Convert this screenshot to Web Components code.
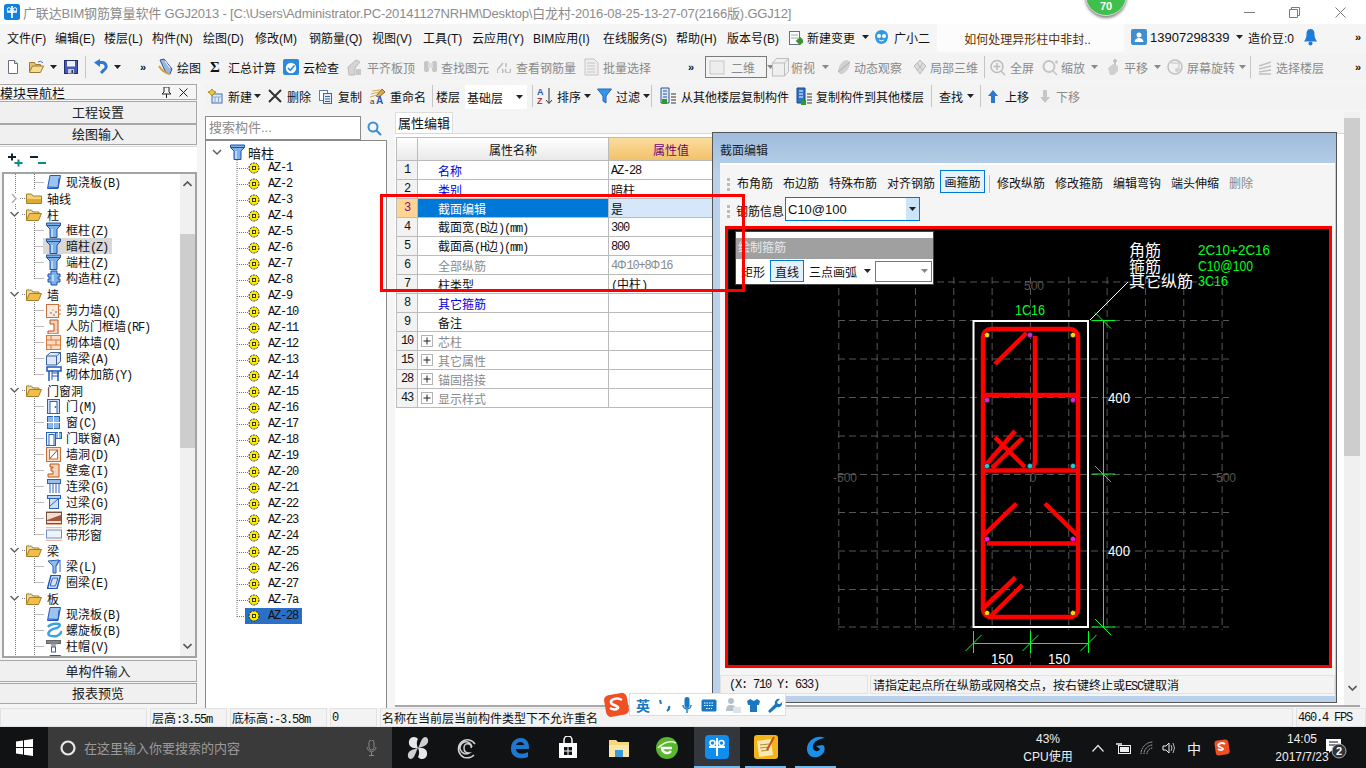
<!DOCTYPE html>
<html lang="zh">
<head>
<meta charset="utf-8">
<title>GGJ2013</title>
<style>
  html, body { margin: 0; padding: 0; height: 100%; overflow: hidden; background: #f5f5f5; }
  body { font: 12px "Liberation Sans", "Noto Sans CJK SC", sans-serif; color: #111; }
</style>
</head>
<body>
<ggj-app>
  <title-bar></title-bar>
  <menu-bar></menu-bar>
  <main-toolbar></main-toolbar>
  <work-area>
    <nav-panel slot="nav"></nav-panel>
    <edit-toolbar slot="bar"></edit-toolbar>
    <component-tree slot="tree"></component-tree>
    <prop-panel slot="props"></prop-panel>
  </work-area>
  <status-strip></status-strip>
  <win-taskbar></win-taskbar>
  <section-dialog></section-dialog>
  <red-mark></red-mark>
  <score-badge></score-badge>
  <ime-bar></ime-bar>
</ggj-app>

<script>
// small helpers shared by all parts
const svg = (w, h, inner, extra = '') => `<svg width="${w}" height="${h}" viewBox="0 0 ${w} ${h}" ${extra}>${inner}</svg>`;
const caret = (c = '#222') => svg(7, 4, `<path d="M0 0h7L3.5 4z" fill="${c}"/>`);
const sep = '<i class="sep"></i>';
// latin text in the old program is a half width mono face
const L = s => `<span>${s.replace(/[\x21-\x7e]+(?: [\x21-\x7e]+)*/g, m => `<span class="l">${m}</span>`)}</span>`;
// turns [x, width, html, class] into a flex row, x only decides the margin
const flow = (items, start = 0) => {
  let cur = start;
  return items.map(([x, w, html, cls = '']) => {
    const m = x - cur; cur = x + w;
    return `<span class="it ${cls}" style="margin-left:${m}px;width:${w}px">${html}</span>`;
  }).join('');
};
const flowCss = `
  .it { flex: none; display: flex; align-items: center; white-space: nowrap; height: 100%; }
  .g { color: #8a8a8a; }
  .sep { display: block; width: 1px; height: 22px; background: #c4c4c4; }
  .l { font: 12px "Liberation Mono", monospace; letter-spacing: -1.2px; white-space: pre; }
  svg { display: block; flex: none; }
`;

// toolbar icons
const I = {
  doc: svg(16,16,'<path d="M3.5 1.5h6l3 3v10h-9z" fill="#fff" stroke="#6a7080"/><path d="M9.5 1.5v3h3" fill="#d8dde8" stroke="#6a7080"/>'),
  open: svg(17,16,'<path d="M1.5 13V3.5h5l1 2h5v2" fill="#e6c26c" stroke="#9d7a30"/><path d="M1.5 13l3-6h11l-3 6.5h-11z" fill="#f6dc92" stroke="#9d7a30"/><path d="M10 3q3-2 5 1" fill="none" stroke="#3a78c8"/>'),
  save: svg(16,16,'<rect x="1.5" y="1.5" width="13" height="13" fill="#4659b5" stroke="#232d72"/><rect x="4" y="2" width="8" height="5.5" fill="#eef1fb"/><rect x="5" y="10" width="6" height="4.5" fill="#c5cbe3"/><rect x="8.5" y="11" width="1.5" height="3" fill="#334"/>'),
  undo: svg(14,16,'<path d="M4 3.5h4a4 4 0 0 1 2 7.5l-3 3" fill="none" stroke="#2f78cf" stroke-width="3"/><path d="M6 0v8L0 3.5z" fill="#2f78cf"/>'),
  draw: svg(17,18,'<path d="M3 2l4-1 8 10-2 5-4-1z" fill="#9ab7df" stroke="#2c5596"/><path d="M2 8q4 7 11 8" fill="none" stroke="#d5a33c" stroke-width="2"/><path d="M8 3l5 7" stroke="#fff"/>'),
  cloud: svg(16,16,'<rect width="16" height="16" rx="2" fill="#2a8ade"/><circle cx="8" cy="9" r="5.2" fill="#fff"/><path d="M5 9l2.3 2.3L11.5 6.5" fill="none" stroke="#2a8ade" stroke-width="1.6"/>'),
  flat: svg(15,18,'<path d="M1 9l8-7 4 2-5 6v7H2z" fill="#d4d4d4" stroke="#bbb"/><rect x="9" y="11" width="5" height="6" fill="#c8c8c8"/>'),
  find: svg(15,16,'<rect x="1" y="2" width="5" height="11" rx="2" fill="#c6c6c6"/><rect x="9" y="2" width="5" height="11" rx="2" fill="#c6c6c6"/><rect x="5" y="4" width="5" height="5" fill="#ddd"/>'),
  look: svg(14,12,'<path d="M1 8a3 3 0 1 0 4 0M1 8l5-6M9 8a2.500 2.500 0 1 0 4 0M9 6V2" fill="none" stroke="#bdbdbd" stroke-width="1.5"/>'),
  batch: svg(15,18,'<path d="M1 1h9l4 4v12H1z" fill="#eee" stroke="#c4c4c4"/><path d="M3 5h8M3 8h8M3 11h8M3 14h8" stroke="#c4c4c4"/>'),
  square: svg(16,16,'<rect x="1" y="2" width="14" height="13" fill="#ededed" stroke="#c8c8c8"/>'),
  cube: svg(19,20,'<path d="M1.500 6l4-4.500h12v13l-4 4.500h-12zM1.500 6h12v13M13.500 6l4-4.500" fill="#efefef" stroke="#bdbdbd"/>'),
  orbit: svg(16,18,'<ellipse cx="8" cy="9" rx="4.500" ry="8" transform="rotate(35 8 9)" fill="#d0d0d0"/><path d="M2 14L14 4" stroke="#aaa"/>'),
  part: svg(14,16,'<path d="M7 1l6 6-6 8-6-8z" fill="#dcdcdc" stroke="#bcbcbc"/><path d="M4 4l6 8M10 4l-6 8" stroke="#bcbcbc"/>'),
  full: svg(16,17,'<circle cx="7" cy="7.500" r="6" fill="#f2f2f2" stroke="#bcbcbc" stroke-width="1.500"/><path d="M7 4v7M3.500 7.500h7M11 12l4 4" stroke="#bcbcbc" stroke-width="1.500"/>'),
  zoom: svg(17,17,'<circle cx="7" cy="7.500" r="5.500" fill="#f4f4f4" stroke="#c4c4c4" stroke-width="2"/><path d="M11 12l4 4M13 3h3M14.500 1.500v3" stroke="#c4c4c4" stroke-width="1.500"/>'),
  pan: svg(15,18,'<path d="M3 10l5-4 5 2v5l-4 4H5z" fill="#cfcfcf"/><path d="M10 1v6M8 3h4" stroke="#b8b8b8" stroke-width="1.500"/>'),
  rotate: svg(16,18,'<circle cx="8" cy="9" r="7" fill="#f2f2f2" stroke="#c0c0c0" stroke-width="1.500"/><path d="M4 5h8v8" fill="none" stroke="#c0c0c0"/><circle cx="10" cy="12" r="2" fill="#d0d0d0"/>'),
  floor: svg(14,15,'<path d="M1 6l12-4M1 9l12-3M1 12l12-2M1 14h12" stroke="#c0c0c0" stroke-width="1.500"/>'),
  news: svg(15,17,'<rect x="1.500" y="2.500" width="10" height="13" fill="#fff" stroke="#6a7080"/><path d="M3 6h7M3 9h7" stroke="#9aa"/><rect x="9" y="9" width="6" height="6" transform="rotate(45 12 12)" fill="#3d8f39"/>'),
  doll: svg(15,15,'<path d="M1 6a6.500 6 0 0 1 13 0c0 5-3 8-6.500 8S1 11 1 6z" fill="#2f9be6"/><circle cx="5" cy="6" r="2" fill="#fff"/><circle cx="10" cy="6" r="2" fill="#fff"/><path d="M5 10q2.500 2 5 0" stroke="#fff" fill="none"/>'),
  user: svg(16,16,'<rect width="16" height="16" rx="2" fill="#3e8ed0"/><circle cx="8" cy="6" r="2.500" fill="#fff"/><path d="M3.500 13c.5-3 2-4 4.500-4s4 1 4.500 4z" fill="#fff"/>'),
  bell: svg(13,18,'<path d="M6.500 1C3 1 2.500 4 2.500 7S1 12 0 13.500h13C12 12 10.500 10 10.500 7S10 1 6.500 1z" fill="#1b7cd9"/><circle cx="6.500" cy="15.500" r="2" fill="#1b7cd9"/>'),
  newp: svg(16,16,'<rect x="5" y="6" width="10" height="9" fill="#dfe7f5" stroke="#4470b0"/><path d="M5 9h10M8 9v6M11.500 9v6" stroke="#8fa8cf"/><path d="M5 1L7 3.500 9 4 7 5.500 5 8 3 5.500 1 4 3 3.500z" fill="#e9c93a" stroke="#a88d1c"/>'),
  del: svg(14,14,'<path d="M1 1l12 12M13 1L1 13" stroke="#333" stroke-width="2"/>'),
  copy: svg(15,15,'<rect x="1.500" y="1.500" width="8" height="10" fill="#fff" stroke="#5a7fb0"/><rect x="5.500" y="4.500" width="8" height="10" fill="#dfe9f7" stroke="#3c66a5"/><path d="M7 7.500h5M7 10h5M7 12.500h5" stroke="#3c66a5"/>'),
  rename: svg(17,17,'<path d="M7 8L13 1l3 3-6 5z" fill="#d5ad4f" stroke="#8b6d1e"/><path d="M3 3l8-1M2 6l8-2M1 9l7-2" stroke="#d5ad4f"/><text x="1" y="16" font-size="8" font-family="Liberation Sans" fill="#333">a</text><text x="7" y="16" font-size="10" font-weight="bold" font-family="Liberation Sans" fill="#1f59bd">A</text>'),
  sort: svg(16,18,'<text x="0" y="8" font-size="9" font-weight="bold" font-family="Liberation Sans" fill="#1f59bd">A</text><text x="0" y="17" font-size="9" font-weight="bold" font-family="Liberation Sans" fill="#c0392b">Z</text><path d="M12 1v15M9 13l3 3.500 3-3.500" fill="none" stroke="#333"/>'),
  funnel: svg(15,16,'<path d="M.5 1h14L9 8v7l-3-2V8z" fill="#3794e8" stroke="#1e68b0"/>'),
  fromf: svg(17,19,'<path d="M1 1h8v15H1z" fill="#dbe6f6" stroke="#2c5596"/><path d="M3 4h4M3 7h4M3 10h4" stroke="#2c5596"/><rect x="2" y="12" width="5" height="5" fill="#2f9a2f"/><path d="M11 7h5M11 10h5M11 13h5M11 16h5" stroke="#777" stroke-width="1.500"/>'),
  tof: svg(17,19,'<path d="M1 1h8v15H1z" fill="#2e72c9" stroke="#1d4b8e"/><path d="M3 4h4M3 7h4M3 10h4" stroke="#fff"/><rect x="5" y="13" width="5" height="5" fill="#2f9a2f"/><path d="M11 7h5M11 10h5M11 13h5M11 16h5" stroke="#777" stroke-width="1.500"/>'),
  up: svg(10,13,'<path d="M5 0l5 6H7v7H3V6H0z" fill="#2a78d2"/>'),
  down: svg(10,13,'<path d="M5 13l5-6H7V0H3v7H0z" fill="#c6c6c6"/>'),
  gear: svg(12,12,'<circle cx="6" cy="6" r="5" fill="#ffea00" stroke="#222" stroke-dasharray="2 1.100"/><rect x="4" y="4" width="4" height="4" fill="#333"/><rect x="5" y="5" width="2" height="2" fill="#ff0"/>'),
};

// tree icons, same 16 box
const T = {
  folder: svg(16,15,'<path d="M.5 12.500V3h5l1.500 2h8.500v7.500z" fill="#f3d376" stroke="#a2812c"/><path d="M1 8h14v4H1z" fill="#e3a92f"/>'),
  open: svg(16,15,'<path d="M.5 13V3h5l1.500 2h6v2" fill="#ecd9a8" stroke="#a2812c"/><path d="M.5 13.500l3-7h12l-3 7z" fill="#f2bd48" stroke="#a2812c"/>'),
  col: svg(15,16,'<path d="M.5 1h14v2.500l-3.500 3.500v8.500H4V7L.5 3.500z" fill="#7cb1ea" stroke="#1f4fa8"/><path d="M1 3.500h13" stroke="#1f4fa8"/><path d="M6 7v8" stroke="#fff"/>'),
  gzz: svg(15,16,'<path d="M5 1h6v3h3v3h-2v2h2v3h-3v3H5v-3H2V9h2V7H2V4h3z" fill="#7cb1ea" stroke="#1f4fa8"/><path d="M7 5v6" stroke="#fff"/>'),
  wall: svg(15,15,'<rect x=".5" y="1.500" width="12" height="13" fill="#fbeadd" stroke="#c8703a"/><path d="M13 3h2M13 7h2M13 11h2" stroke="#c8703a"/><circle cx="5" cy="10" r="1" fill="#999"/><circle cx="8" cy="12" r="1" fill="#999"/><circle cx="10" cy="9" r="1" fill="#999"/><circle cx="7" cy="7" r=".8" fill="#aaa"/>'),
  rf: svg(15,15,'<path d="M4 1h8v14H2v-3h6V5H4z" fill="#f7d3b8" stroke="#b8551d"/>'),
  brick: svg(15,15,'<rect x=".5" y=".5" width="14" height="14" fill="#fbdcc4" stroke="#d77a3a"/><path d="M1 5h14M1 10h14M5 0v5M10 5v5M5 10v5" stroke="#d77a3a"/>'),
  beam: svg(15,15,'<path d="M.5 5l4-3.500h10v9l-4 3.500H.5z" fill="#dfe8f5" stroke="#3a5f96"/><path d="M.5 5h10v9M10.500 5l4-3.500" fill="none" stroke="#3a5f96"/>'),
  rein: svg(16,16,'<path d="M1 1h14v4H1zM3 5v10M12 5v10" fill="none" stroke="#1f59bd" stroke-width="1.500"/><path d="M6 7h7M6 10h7M6 4V14" stroke="#1f59bd"/>'),
  door: svg(13,15,'<rect x=".5" y=".5" width="12" height="14" fill="#cfe0f6" stroke="#2a62b8"/><rect x="3" y="2.500" width="7" height="12" fill="#fff" stroke="#2a62b8"/><circle cx="8.500" cy="8" r=".9" fill="#2a62b8"/>'),
  win: svg(13,13,'<rect x=".5" y=".5" width="12" height="12" fill="#88b8ea" stroke="#2a62b8"/><path d="M6.500 0v13M0 6.500h13" stroke="#fff"/>'),
  dw: svg(16,15,'<rect x=".5" y="1.500" width="9" height="13" fill="#e8f0fb" stroke="#2a62b8"/><rect x="3" y="3.500" width="5" height="11" fill="#fff" stroke="#2a62b8"/><rect x="9.500" y="1.500" width="6" height="6" fill="#88b8ea" stroke="#2a62b8"/><path d="M12.500 1v6" stroke="#fff"/>'),
  hole: svg(15,15,'<rect x=".5" y=".5" width="14" height="14" fill="#fbdcc4" stroke="#c8703a"/><rect x="3.500" y="3" width="8" height="9" fill="#fff" stroke="#c8703a"/><path d="M3.500 12l8-9" stroke="#8a4a22"/>'),
  niche: svg(13,15,'<path d="M3 1h9v13H1v-3h5V8h-2V5h2V4H3z" fill="#f7d3b8" stroke="#b8551d"/>'),
  link: svg(14,14,'<rect x=".5" y=".5" width="13" height="4" fill="#9cbde8" stroke="#2a62b8"/><path d="M3 5v9M6 5v9M9 5v9M12 5v9" stroke="#2a62b8" stroke-width="1"/>'),
  lintel: svg(14,14,'<rect x=".5" y=".5" width="13" height="3" fill="#b9d3f0" stroke="#2a62b8"/><rect x="2.500" y="3.500" width="9" height="10" fill="#cfe0f6" stroke="#2a62b8"/><path d="M3 11l8-7" stroke="#2a62b8"/>'),
  band: svg(16,14,'<rect x=".5" y="1.500" width="15" height="11" fill="#f2ddd0" stroke="#7a5040"/><path d="M1 9l14-5v6H1z" fill="#a2583a"/><path d="M0 .5h16M0 13.500h16" stroke="#e3a68c"/>'),
  bandw: svg(16,14,'<rect x=".5" y="3" width="15" height="8" fill="#eef3fb" stroke="#6b8fc7"/><path d="M0 .5h16M0 13.500h16" stroke="#f0b8a0" stroke-width="1.500"/>'),
  liang: svg(14,15,'<path d="M1 2l11-1-3 6v7H6V7z" fill="#8fbdec" stroke="#2a62b8"/><path d="M9 7l4-6v12" fill="none" stroke="#2a62b8"/>'),
  ring: svg(14,14,'<path d="M4 .5h9.500L10 13.500H.5z" fill="#fff" stroke="#1f59bd" stroke-width="1.500"/><path d="M5.500 3h5.500L8.500 11H3z" fill="#d4e3f7" stroke="#1f59bd"/>'),
  slab: svg(14,14,'<path d="M3 .5h10.500L11 13.500H.5z" fill="#9cc4ef" stroke="#1f59bd"/><path d="M1 12l10 .5M12 3l-1 10" stroke="#1f59bd"/>'),
  spiral: svg(16,16,'<path d="M2 5q3-4 11-3 2 2-2 4-6 1-8 4-3 5 8 4 5-3 4-5" fill="none" stroke="#3aa0e4" stroke-width="2.500"/>'),
  cap: svg(15,13,'<rect x=".5" y=".5" width="14" height="3" fill="#888" stroke="#666"/><path d="M4 3.500h7L9 7H6z" fill="#aaa"/><rect x="5.500" y="7" width="4" height="5" fill="#fff" stroke="#2a62b8"/>'),
};

class Part extends HTMLElement {
  connectedCallback() {
    this.attachShadow({ mode: 'open' });
    this.shadowRoot.innerHTML = `<style>${flowCss}${this.css()}</style>${this.html()}`;
  }
  css() { return ''; }
  html() { return '<slot></slot>'; }
}

class GgjApp extends Part {
  css() { return `:host { display: flex; flex-direction: column; position: relative; width: 1366px; height: 768px; overflow: hidden; background: #f5f5f5; }`; }
}

class TitleBar extends Part {
  css() { return `
    :host { display: flex; flex: none; height: 24px; background: #fff; color: #8b8b8b; font-size: 13px; letter-spacing: -.17px; align-items: center; position: relative; }
    .ctl { stroke: #7a7a7a; fill: none; }
  `; }
  html() {
    return flow([
      [4, 16, svg(16,16,'<rect width="16" height="16" rx="2.500" fill="#1081e0"/><path d="M8 2v12M3 8h10" stroke="#fff" stroke-width="1.700"/><circle cx="5" cy="5.500" r="1.800" fill="none" stroke="#fff"/><circle cx="11" cy="5.500" r="1.800" fill="none" stroke="#fff"/>')],
      [23, 770, '广联达BIM钢筋算量软件 GGJ2013 - [C:\\Users\\Administrator.PC-20141127NRHM\\Desktop\\白龙村-2016-08-25-13-27-07(2166版).GGJ12]'],
      [1244, 11, svg(11,11,'<path d="M0 5.500h11" class="ctl"/>')],
      [1289, 11, svg(11,11,'<path d="M.5 2.500h8v8h-8zM2.500 2.500v-2h8v8h-2" class="ctl"/>')],
      [1335, 11, svg(11,11,'<path d="M.5.500l10 10M10.500.500l-10 10" class="ctl"/>')],
    ]);
  }
}

class MenuBar extends Part {
  css() { return `
    :host { display: flex; flex: none; height: 26px; padding-bottom: 2px; background: #f5f5f5; font-size: 12px; }
    .pill { background: #fcfcfc; color: #5b3000; border-radius: 3px; justify-content: center; padding-right: 6px; box-sizing: border-box; height: 28px; }
  `; }
  html() {
    return flow([
      [7,38,'文件(F)'],[55,39,'编辑(E)'],[104,38,'楼层(L)'],[152,42,'构件(N)'],[203,42,'绘图(D)'],
      [255,44,'修改(M)'],[309,54,'钢筋量(Q)'],[372,41,'视图(V)'],[423,39,'工具(T)'],[472,51,'云应用(Y)'],
      [533,60,'BIM应用(I)'],[603,63,'在线服务(S)'],[676,41,'帮助(H)'],[727,52,'版本号(B)'],
      [788,15,I.news],[807,48,'新建变更'],[862,7,caret()],[874,15,I.doll],[894,36,'广小二'],
      [937,187,'如何处理异形柱中非封..','pill'],
      [1131,16,I.user],[1150,78,'<span style="font-size:13px">13907298339</span>'],[1236,7,caret()],
      [1248,48,'造价豆:0'],[1304,13,I.bell],[1355,10,'<b style="font-size:11px">»</b>'],
    ]);
  }
}

class MainToolbar extends Part {
  css() { return `
    :host { display: flex; flex: none; height: 26px; margin-top: 2px; background: #f3f3f3; font-size: 12px; }
    .combo { border: 1px solid #7a7a7a; box-sizing: border-box; height: 22px; margin-top: 2px; gap: 6px; padding-left: 3px; background: #f3f3f3; }
    .sig { font: bold 15px "Liberation Serif", serif; }
  `; }
  html() {
    return flow([
      [5,16,I.doc],[28,17,I.open],[50,7,caret()],[63,16,I.save],[85,1,sep],[94,14,I.undo],[114,7,caret()],[140,10,'<b style="font-size:11px">»</b>'],
      [157,17,I.draw],[177,24,'绘图'],[210,10,'<span class="sig">Σ</span>'],[228,48,'汇总计算'],[283,16,I.cloud],[303,36,'云检查'],
      [347,15,I.flat],[367,48,'平齐板顶','g'],[423,15,I.find],[441,48,'查找图元','g'],[497,14,I.look],[516,60,'查看钢筋量','g'],[584,15,I.batch],[603,48,'批量选择','g'],
      [688,10,'<b style="font-size:11px">»</b>'],
      [705,62,`${I.square}<span class="g">二维</span><span style="margin-left:6px">${caret('#888')}</span>`,'combo'],
      [771,19,I.cube],[791,25,'俯视','g'],[822,7,caret('#888')],[836,16,I.orbit],[854,48,'动态观察','g'],[913,14,I.part],[930,48,'局部三维','g'],[984,1,sep],
      [990,16,I.full],[1010,24,'全屏','g'],[1042,17,I.zoom],[1061,24,'缩放','g'],[1091,7,caret('#888')],[1105,15,I.pan],[1124,24,'平移','g'],[1154,7,caret('#888')],
      [1167,16,I.rotate],[1187,48,'屏幕旋转','g'],[1239,7,caret('#888')],[1250,1,sep],[1258,14,I.floor],[1276,48,'选择楼层','g'],[1355,10,'<b style="font-size:11px">»</b>'],
    ]);
  }
}

class WorkArea extends Part {
  css() { return `
    :host { display: grid; flex: 1; min-height: 0; margin-top: 4px; grid-template-columns: 197px 8px 182px 8px 965px; grid-template-rows: 26px 1fr; }
    ::slotted([slot=nav]) { grid-column: 1; grid-row: 1 / 3; }
    ::slotted([slot=bar]) { grid-column: 3 / 6; grid-row: 1; width: 1161px; }
    ::slotted([slot=tree]) { grid-column: 3; grid-row: 2; }
    ::slotted([slot=props]) { grid-column: 5; grid-row: 2; }
  `; }
  html() { return '<slot name="nav"></slot><slot name="bar"></slot><slot name="tree"></slot><slot name="props"></slot>'; }
}

const NAV = [
  [2,'slab','现浇板(B)'],[1,'folder','轴线'],[1,'open','柱'],[2,'col','框柱(Z)'],[2,'col','暗柱(Z)',1],[2,'col','端柱(Z)'],[2,'gzz','构造柱(Z)',2],
  [1,'open','墙'],[2,'wall','剪力墙(Q)'],[2,'rf','人防门框墙(RF)'],[2,'brick','砌体墙(Q)'],[2,'beam','暗梁(A)'],[2,'rein','砌体加筋(Y)',2],
  [1,'open','门窗洞'],[2,'door','门(M)'],[2,'win','窗(C)'],[2,'dw','门联窗(A)'],[2,'hole','墙洞(D)'],[2,'niche','壁龛(I)'],[2,'link','连梁(G)'],[2,'lintel','过梁(G)'],[2,'band','带形洞'],[2,'bandw','带形窗',2],
  [1,'open','梁'],[2,'liang','梁(L)'],[2,'ring','圈梁(E)',2],
  [1,'open','板'],[2,'slab','现浇板(B)'],[2,'spiral','螺旋板(B)'],[2,'cap','柱帽(V)'],[2,'slab',''],
];

const DOT = 'stroke="#777" stroke-dasharray="1 1"';
const navRow = ([lv, ic, text, flag]) => {
  if (lv === 1) {
    const closed = ic === 'folder';
    const lead = svg(26, 16, `<path d="M15.500 0V16M20 8.500h5" ${DOT}/>` + (closed
      ? '<rect x="10" y="3" width="10" height="10" fill="#fff"/><path d="M12 4l4 4.500-4 4.500" fill="none" stroke="#b0b0b0" stroke-width="1.500"/>'
      : '<rect x="9" y="4" width="12" height="8" fill="#fff"/><path d="M10.500 6l4 4 4-4" fill="none" stroke="#606060" stroke-width="1.500"/>'));
    return `<div class="row">${lead}${T[ic]}<span class="tx">${text}</span></div>`;
  }
  const lead = svg(46, 16, `<path d="M15.500 0V16M34.500 0V${flag === 2 ? 9 : 16}M34.500 8.500h10" ${DOT}/>`);
  const body = `<span class="ico">${T[ic]}</span><span class="tx">${L(text)}</span>`;
  return `<div class="row">${lead}${flag === 1 ? `<span class="hl">${body}</span>` : body}</div>`;
};

class NavPanel extends Part {
  css() { return `
    :host { display: flex; flex-direction: column; min-height: 0; height: 620px; }
    .head { flex: none; height: 14px; border: 1px solid #a8a8a8; border-left: 0; display: flex; align-items: center; font-size: 13px; background: #f5f5f5; position: relative; overflow: hidden; }
    .head .t { flex: 1; }
    .head svg { margin-right: 8px; }
    .btn { flex: none; height: 21px; line-height: 20px; margin: 0; text-align: center; background: #f0f0f0; border: 1px solid #a8a8a8; border-left: 0; box-sizing: border-box; width: 197px; color: #222; font-size: 13px; }
    .btn.first { margin-top: 1px; height: 23px; line-height: 22px; }
    .tools { flex: none; height: 25px; display: flex; align-items: center; gap: 7px; padding-left: 7px; background: #fff; border-top: 1px solid #ddd; margin-top: 1px; }
    .frame { flex: 1; min-height: 0; margin-left: 2px; border: 2px solid #a3a3a3; background: #fff; display: flex; overflow: hidden; margin-bottom: 2px; }
    .list { flex: 1; min-width: 0; overflow: hidden; }
    .row { display: flex; align-items: center; height: 16px; margin-left: -4px; }
    .ico { width: 15px; display: flex; justify-content: center; flex: none; }
    .tx { margin-left: 5px; white-space: nowrap; }
    .hl { display: flex; align-items: center; height: 16px; background: #d9d9d9; width: 66px; padding-left: 3px; margin-left: -3px; }
    .bar { flex: none; width: 15px; background: #f0f0f0; display: flex; flex-direction: column; align-items: center; }
    .arrow { flex: none; height: 20px; display: flex; align-items: center; justify-content: center; }
    .thumb { flex: none; height: 214px; width: 15px; background: #cdcdcd; margin-top: 40px; }
    .rest { flex: 1; }
  `; }
  html() {
    return `
      <div class="head"><span class="t">模块导航栏</span>
        ${svg(9,11,'<path d="M2 0h5v5l2 2H0l2-2zM4.500 7v4" fill="none" stroke="#222"/>')}
        ${svg(9,9,'<path d="M.5.500l8 8M8.500.500l-8 8" stroke="#222"/>')}
      </div>
      <div class="btn first">工程设置</div>
      <div class="btn">绘图输入</div>
      <div class="tools">
        ${svg(16,14,'<path d="M5 .5v7M1 4h8" stroke="#123" stroke-width="2"/><path d="M11.500 6.500v7M7.500 10h8" stroke="#0a8a80" stroke-width="2"/>')}
        ${svg(16,14,'<path d="M0 4h8" stroke="#123" stroke-width="2"/><path d="M8 10h8" stroke="#0a8a80" stroke-width="2"/>')}
      </div>
      <div class="frame">
        <div class="list">${NAV.map(navRow).join('')}</div>
        <div class="bar">
          <div class="arrow">${svg(9,6,'<path d="M.5 5L4.500 1l4 4" fill="none" stroke="#555" stroke-width="1.600"/>')}</div>
          <div class="thumb"></div>
          <div class="rest"></div>
          <div class="arrow">${svg(9,6,'<path d="M.5 1L4.500 5l4-4" fill="none" stroke="#555" stroke-width="1.600"/>')}</div>
        </div>
      </div>
      <div class="btn" style="height:22px;line-height:21px">单构件输入</div>
      <div class="btn" style="height:21px;margin-top:1px">报表预览</div>
    `;
  }
}

class EditToolbar extends Part {
  css() { return `:host { display: flex; height: 24px; padding-bottom: 2px; background: #f3f3f3; font-size: 12px; }
    .w { background: #fff; height: 24px; margin-top: 1px; }`; }
  html() {
    return flow([
      [207,15,I.newp],[228,24,'新建'],[254,7,caret()],[268,14,I.del],[287,24,'删除'],[318,15,I.copy],[338,24,'复制'],[369,17,I.rename],[390,36,'重命名'],[432,1,sep],
      [436,24,'楼层'],[465,62,`<span style="flex:1;padding-left:2px">基础层</span><span style="margin-right:4px">${caret()}</span>`,'w'],[532,1,sep],
      [537,16,`${I.sort}`],[557,24,'排序'],[584,7,caret()],[597,15,I.funnel],[616,24,'过滤'],[643,7,caret()],[651,1,sep],
      [660,17,I.fromf],[681,108,'从其他楼层复制构件'],[796,17,I.tof],[816,108,'复制构件到其他楼层'],[931,1,sep],[939,24,'查找'],[967,7,caret()],[980,1,sep],
      [988,10,I.up],[1005,24,'上移'],[1040,10,I.down],[1056,24,'下移','g'],
    ], 205);
  }
}

const AZ = ['AZ-1','AZ-2','AZ-3','AZ-4','AZ-5','AZ-6','AZ-7','AZ-8','AZ-9','AZ-10','AZ-11','AZ-12','AZ-13','AZ-14','AZ-15','AZ-16','AZ-17','AZ-18','AZ-19','AZ-20','AZ-21','AZ-22','AZ-23','AZ-24','AZ-25','AZ-26','AZ-27','AZ-7a','AZ-28'];

class ComponentTree extends Part {
  css() { return `
    :host { display: flex; flex-direction: column; height: 595px; margin-top: 6px; box-sizing: border-box; }
    .search { flex: none; height: 24px; display: flex; gap: 2px; }
    .box { width: 156px; border: 1px solid #8a8a8a; box-sizing: border-box; background: #fff; color: #8a8a8a; font-size: 13px; padding-left: 3px; line-height: 22px; height: 24px; }
    .go { width: 22px; display: flex; align-items: center; justify-content: center; }
    .tree { flex: 1; margin-top: 0; border: 1px solid #8a8a8a; border-bottom: 2px solid #8a8a8a; background: #fff; overflow: hidden; padding-top: 3px; }
    .r { display: flex; align-items: center; height: 16px; white-space: nowrap; }
    .l { margin-left: 8px; }
    .sel { display: flex; align-items: center; height: 16px; }
    .on { background: #2a70c8; padding-left: 3px; width: 54px; }
  `; }
  html() {
    const rows = AZ.map((n, i) => {
      const last = i === AZ.length - 1;
      const lead = svg(last ? 39 : 42, 16, `<path d="M31 0V${last ? 9 : 16}M31 8.500h${last ? 8 : 11}" ${DOT}/>`);
      return `<div class="r">${lead}<span class="sel ${last ? 'on' : ''}">${I.gear}<span class="l">${n}</span></span></div>`;
    }).join('');
    return `
      <div class="search"><div class="box">搜索构件...</div>
        <div class="go">${svg(15,15,'<circle cx="6" cy="6" r="4.500" fill="none" stroke="#3a8fd8" stroke-width="2"/><path d="M9.500 9.500L14 14" stroke="#3a8fd8" stroke-width="2.200"/>')}</div></div>
      <div class="tree">
        <div class="r" style="font-size:13px">${svg(24,16,'<path d="M7 6l4 4 4-4" fill="none" stroke="#606060" stroke-width="1.500"/>')}${T.col}<span style="margin-left:3px">暗柱</span></div>
        ${rows}
      </div>`;
  }
}

const PROPS = [
  ['1','名称','AZ-28','b'],['2','类别','暗柱','b'],['3','截面编辑','是','s'],['4','截面宽(B边)(mm)','300',''],['5','截面高(H边)(mm)','800',''],
  ['6','全部纵筋','4Φ10+8Φ16','g'],['7','柱类型','(中柱)',''],['8','其它箍筋','','b'],['9','备注','',''],
  ['10','芯柱','','p'],['15','其它属性','','p'],['28','锚固搭接','','p'],['43','显示样式','','p'],
];

class PropPanel extends Part {
  css() { return `
    :host { display: flex; position: relative; height: 595px; margin-top: 2px; background: #fff; box-sizing: border-box; border-bottom: 2px solid #a8a8a8; flex-direction: column; width: 965px; }
    .tabs { flex: none; height: 21px; border-bottom: 1px solid #d8d8d8; background: #f5f5f5; }
    .tab { display: block; width: 58px; height: 21px; box-sizing: border-box; background: #fff; border: 1px solid #ddd; border-bottom: 0; text-align: center; line-height: 21px; font-size: 13px; }
    .grid { display: grid; grid-template-columns: 21px 191px 125px; grid-auto-rows: 19px; margin: 3px 0 0 1px; width: 337px; border-top: 1px solid #bbb; border-left: 1px solid #bbb; }
    .c { border-right: 1px solid #bbb; border-bottom: 1px solid #bbb; box-sizing: border-box; display: flex; align-items: center; white-space: nowrap; font-size: 12px; }
    .n { background: #f2f2f2; justify-content: center; font: 12px "Liberation Mono", monospace; letter-spacing: -1.2px; }
    .name { padding-left: 20px; }
    .hd { height: 23px; background: linear-gradient(#fff, #e9e9e9); justify-content: center; }
    .val { padding-left: 2px; }
    .hv { height: 23px; background: linear-gradient(#fbdc9e, #f2c26a); color: #6e0a78; justify-content: center; }
    .b { color: #0000e0; }
    .p { padding-left: 3px; color: #8a8a8a; }
    .p svg { margin-right: 5px; }
    .sn { background: #ffd591; color: #7e1078; }
    .ss { background: #0078d7; color: #fff; }
    .sv { background: #d5e7f8; }
    .sb { position: absolute; right: 0; top: 0; bottom: 0; width: 16px; background: #f0f0f0; display: flex; flex-direction: column; align-items: center; }
    .th { width: 16px; height: 338px; background: #cdcdcd; margin-top: 6px; }
    .sp { flex: 1; }
    .dn { height: 20px; }
  `; }
  html() {
    const plus = svg(12,12,'<rect x=".5" y=".5" width="11" height="11" fill="#fff" stroke="#b4b4b4"/><path d="M6 2.500v7M2.500 6h7" stroke="#222"/>');
    const rows = PROPS.map(([n, name, val, k]) => {
      const cn = k === 's' ? 'sn' : '';
      const nameCell = k === 'p'
        ? `<div class="c p">${plus}${name}</div>`
        : `<div class="c name ${k === 'b' ? 'b' : ''} ${k === 'g' ? 'g' : ''} ${k === 's' ? 'ss' : ''}">${L(name)}</div>`;
      return `<div class="c n ${cn}">${n}</div>${nameCell}<div class="c val ${k === 's' ? 'sv' : ''} ${k === 'g' ? 'g' : ''}">${L(val)}</div>`;
    }).join('');
    return `
      <div class="tabs"><span class="tab">属性编辑</span></div>
      <div class="grid" style="grid-template-rows:23px">
        <div class="c hd"></div><div class="c hd">属性名称</div><div class="c hv">属性值</div>
        ${rows}
      </div>
      <div class="sb">
        <div class="th"></div><div class="sp"></div>
        <div class="dn">${svg(9,6,'<path d="M.5 1L4.500 5l4-4" fill="none" stroke="#555" stroke-width="1.600"/>')}</div>
      </div>`;
  }
}

class SectionCanvas extends Part {
  css() { return `
    :host { display: block; position: relative; flex: none; width: 607px; height: 442px; margin: 3px 0 0 5px; background: #000; }
    svg.main { position: absolute; left: 0; top: 0; }
    text { font-family: "Liberation Sans", "Noto Sans CJK SC", sans-serif; }
    .pop { position: absolute; left: 10px; top: 5px; width: 199px; height: 54px; background: #fff; border: 1px solid #444; box-sizing: border-box; padding-top: 6px; font-size: 12px; }
    .pt { height: 21px; background: #a0a0a0; color: #e8e8e8; padding-left: 2px; line-height: 21px; font-size: 12px; }
    .pr { height: 24px; display: flex; align-items: center; }
    .on { border: 1px solid #0078d7; background: #e5f1fb; height: 22px; box-sizing: border-box; justify-content: center; }
    .cb { border: 1px solid #777; height: 21px; box-sizing: border-box; justify-content: flex-end; padding-right: 3px; }
  `; }
  html() {
    let grid = '';
    for (let i = 0; i <= 10; i++) {
      const x = 838.8 + i * 38.33;
      const bottom = i === 5 ? 665 : 630;
      grid += `<path d="M${x} 277V${bottom}"/>`;
    }
    for (const y of [282, 320.5, 359, 397.5, 436, 474.5, 512.5, 551, 589.500, 627]) grid += `<path d="M838 ${y}H1229"/>`;
    const bars = [
      'M983 337a8 8 0 0 1 8-8H1070a8 8 0 0 1 8 8V609a8 8 0 0 1-8 8H991a8 8 0 0 1-8-8Z',
      'M1035 336V460q0 8-6 8','M985 395H1078','M985 470.500H1078','M987 543.500H1076',
      'M995 364L1026.500 333','M1015 431L985 466','M1022.500 438L992 468','M995 437.500L1025 467',
      'M1016.500 503.500L984 535','M1045 503.500L1077 535','M1015.500 577.500L983.500 608','M1022.500 585L991 616',
    ];
    const dot = (x, y, c) => `<circle cx="${x}" cy="${y}" r="2.600" fill="${c}" stroke="#222" stroke-dasharray="1.500 .8"/>`;
    const dots = [[987,335,'#ffd400'],[1030,335,'#c030e0'],[1073,335,'#ffd400'],[987,400,'#e020e0'],[1073,400,'#e020e0'],
      [987,466,'#20c8d8'],[1030,466,'#20c8d8'],[1073,466,'#20c8d8'],[987,539,'#e020e0'],[1073,539,'#e020e0'],[987,613,'#ffd400'],[1073,613,'#ffd400']]
      .map(d => dot(...d)).join('');
    const G = '#00ff20';
    const tickV = y => `<path d="M1092 ${y}H1115M1095 ${y - 8}L1111 ${y + 8}"/>`;
    const tickH = x => `<path d="M${x} 631V653M${x - 8} 651L${x + 8} 635"/>`;
    const fit = len => `textLength="${len}" lengthAdjust="spacingAndGlyphs"`;
    const wt = (x, y, t, sz = 16, len = 0) => `<text x="${x}" y="${y}" font-size="${sz}" fill="#fff" ${len ? fit(len) : ''}>${t}</text>`;
    const gt = (x, y, t, len) => `<text x="${x}" y="${y}" font-size="15" fill="${G}" ${fit(len)}>${t}</text>`;
    const dim = (x, y, t, a = 'start') => `<text x="${x}" y="${y}" font-size="12" fill="#555" text-anchor="${a}">${t}</text>`;
    return `
      <svg class="main" width="607" height="442" viewBox="725 226 607 442">
        <g stroke="#565656" stroke-dasharray="7 4" fill="none">${grid}</g>
        ${dim(1034,290,'500','middle')}${dim(845,482,'-500','middle')}${dim(1033,482,'0','middle')}${dim(1226,482,'500','middle')}
        <rect x="973.500" y="321" width="114.500" height="306" fill="none" stroke="#fff" stroke-width="2"/>
        <path d="M1090 320L1128 282" stroke="#fff"/>
        <g fill="none" stroke="#f00" stroke-width="4.500">${bars.map(d => `<path d="${d}"/>`).join('')}</g>
        ${dots}
        <g stroke="${G}" fill="none">
          <path d="M1103.500 320V627M973 643.500H1088"/>
          ${tickV(320.500)}${tickV(474)}${tickV(627)}
          ${tickH(973.500)}${tickH(1030.500)}${tickH(1088.500)}
        </g>
        ${gt(1015,315,'1C16',30)}
        ${wt(1129,256,'角筋')}${wt(1129,272,'箍筋')}${wt(1129,287,'其它纵筋')}
        ${gt(1198,255,'2C10+2C16',72)}${gt(1198,271,'C10@100',55)}${gt(1198,286,'3C16',30)}
        ${wt(1108,403,'400',15,22)}${wt(1108,556,'400',15,22)}${wt(991,664,'150',15,22)}${wt(1048,664,'150',15,22)}
        <rect x="726.500" y="227.500" width="604" height="439" fill="none" stroke="#f00" stroke-width="3"/>
      </svg>
      <div class="pop">
        <div class="pt">绘制箍筋</div>
        <div class="pr">${flow([[741,25,'矩形'],[770,34,'直线','on'],[809,48,'三点画弧'],[864,7,caret()],[875,57,caret('#888'),'cb']], 736)}</div>
      </div>`;
  }
}

class SectionDialog extends Part {
  css() { return `
    :host { position: absolute; left: 712px; top: 132px; width: 625px; height: 571px; box-sizing: border-box; border: 1px solid #555; background: linear-gradient(#9fbcdc, #b9d1ea 40px); display: flex; flex-direction: column; font-size: 12px; }
    .cap { flex: none; height: 30px; padding-left: 7px; line-height: 37px; color: #222; }
    .body { flex: none; margin-left: 7px; width: 615px; height: 533px; background: #f5f5f5; border-top: 2px solid #fdfdfd; box-sizing: border-box; display: flex; flex-direction: column; }
    .r1 { flex: none; height: 25px; margin-top: 5px; display: flex; }
    .r2 { flex: none; height: 26px; margin-top: 2px; display: flex; }
    .grip { width: 3px; height: 15px; background: repeating-linear-gradient(#bbb 0 3px, transparent 3px 5px); margin-top: 5px; }
    .on { border: 1px solid #0078d7; background: #e5f1fb; box-sizing: border-box; justify-content: center; height: 23px; }
    .sep { height: 18px; margin-top: 3px; }
    .combo { border: 1px solid #0078d7; box-sizing: border-box; height: 24px; background: #fff; font-size: 13px; justify-content: space-between; padding-left: 2px; }
    .dd { width: 13px; height: 22px; background: #cce4f7; display: flex; align-items: center; justify-content: center; }
    .cell { flex: none; height: 19px; background: #f3f3f3; border: 1px solid #e2e2e2; box-sizing: border-box; display: flex; align-items: center; white-space: nowrap; }
    .st { flex: none; display: flex; gap: 2px; margin-top: 7px; }
  `; }
  html() {
    return `
      <div class="cap">截面编辑</div>
      <div class="body">
        <div class="r1">${flow([
          [727,3,'<i class="grip"></i>'],[737,36,'布角筋'],[783,36,'布边筋'],[829,48,'特殊布筋'],[887,48,'对齐钢筋'],[940,45,'画箍筋','on'],[989,1,sep],
          [997,48,'修改纵筋'],[1055,48,'修改箍筋'],[1113,48,'编辑弯钩'],[1171,48,'端头伸缩'],[1229,24,'删除','g'],
        ], 720)}</div>
        <div class="r2">${flow([
          [727,3,'<i class="grip"></i>'],[736,48,'钢筋信息'],
          [785,135,`<span>C10@100</span><span class="dd">${caret()}</span>`,'combo'],
        ], 720)}</div>
        <section-canvas></section-canvas>
        <div class="st">
          <div class="cell" style="width:148px;padding-left:8px"><span class="l">(X: 710 Y: 633)</span></div>
          <div class="cell" style="flex:1;padding-left:2px">${L('请指定起点所在纵筋或网格交点，按右键终止或ESC键取消')}</div>
        </div>
      </div>`;
  }
}

class RedMark extends Part {
  css() { return `:host { position: absolute; left: 380px; top: 194px; width: 365px; height: 98px; box-sizing: border-box; border: 3px solid #f00; pointer-events: none; }`; }
  html() { return ''; }
}

class ScoreBadge extends Part {
  css() { return `:host { position: absolute; left: 1085px; top: -26px; width: 42px; height: 42px; border-radius: 50%; background: #3fc04c; border: 1px solid #d8d8d8; box-shadow: 0 2px 3px #888; color: #fff; font: bold 11px "Liberation Sans", sans-serif; display: flex; align-items: flex-end; justify-content: center; padding-bottom: 3px; box-sizing: border-box; }`; }
  html() { return '70'; }
}

class ImeBar extends Part {
  css() { return `
    :host { position: absolute; left: 603px; top: 692px; height: 26px; width: 183px; }
    .bg { position: absolute; left: 26px; top: 1px; right: 0; height: 23px; background: #fff; border: 1px solid #cfe0f0; box-sizing: border-box; }
    .row { position: relative; display: flex; height: 100%; color: #1a78c2; font-weight: bold; font-size: 14px; }
  `; }
  html() {
    return `<div class="bg"></div><div class="row">${flow([
      [603,27,svg(27,26,'<rect x="2" y="2" width="23" height="22" rx="5" transform="rotate(-10 13 13)" fill="#f04e23"/><path d="M19 8q-5-3-10 0-3 3 2 5t4 3q-3 3-8 0" fill="none" stroke="#fff" stroke-width="2.600"/>')],
      [636,14,'英'],[657,16,svg(16,14,'<path d="M3 2l1 4M12 8q1 3-2 5" fill="none" stroke="#1a78c2" stroke-width="2"/>')],
      [682,10,svg(10,17,'<rect x="2.500" y="0" width="5" height="11" rx="2.500" fill="#1a78c2"/><path d="M1 8a4 4 0 0 0 8 0M5 12v4" fill="none" stroke="#1a78c2" stroke-width="1.400"/>')],
      [701,16,svg(16,13,'<rect x=".5" y=".5" width="15" height="12" rx="1.500" fill="#1a78c2"/><path d="M3 4h10M3 6.500h10M5 9.500h6" stroke="#fff" stroke-dasharray="1.500 1"/>')],
      [725,16,svg(16,16,'<circle cx="6" cy="4" r="3" fill="#b5c2cc"/><path d="M1 14c0-5 2-6 5-6s4 1 5 3v3z" fill="#b5c2cc"/><rect x="8" y="10" width="8" height="6" fill="#dde3e8"/>')],
      [746,15,svg(15,15,'<path d="M4 1L1 3l1 4h2v7h7V7h2l1-4-3-2-3 2z" fill="#1a78c2"/>')],
      [767,15,svg(15,15,'<path d="M1 13l7-7a4 4 0 0 1 5-5l-3 3 1 2 2 0 2-2a4 4 0 0 1-5 5l-7 6z" fill="#1a78c2"/>')],
    ], 603)}</div>`;
  }
}

class StatusStrip extends Part {
  css() { return `
    :host { display: flex; flex: none; height: 19px; gap: 3px; background: #f5f5f5; }
    .cell { border: 1px solid #e2e2e2; height: 19px; display: flex; align-items: center; white-space: nowrap; box-sizing: border-box; background: #f3f3f3; padding-left: 1px; overflow: hidden; }
  `; }
  html() {
    return `
      <div class="cell" style="width:147px"></div>
      <div class="cell" style="width:77px">${L('层高:3.55m')}</div>
      <div class="cell" style="width:97px">${L('底标高:-3.58m')}</div>
      <div class="cell" style="width:47px">${L('0')}</div>
      <div class="cell" style="flex:1">名称在当前层当前构件类型下不允许重名</div>
      <div class="cell" style="width:70px">${L('460.4 FPS')}</div>`;
  }
}

class WinTaskbar extends Part {
  css() { return `
    :host { display: flex; flex: none; height: 41px; background: #101214; color: #f0f0f0; font-size: 12px; position: relative; }
    .search { background: #3a3a3a; color: #9a9a9a; font-size: 13px; display: flex; align-items: center; }
    .act { background: #33363a; height: 100%; justify-content: center; box-sizing: border-box; }
    .u { border-bottom: 2px solid #76b9ed; box-sizing: border-box; justify-content: center; height: 100%; }
    .col { flex-direction: column; justify-content: center; gap: 2px; align-items: center; line-height: 16px; }
    .col span { display: block; }
  `; }
  html() {
    const win = svg(17,17,'<path d="M0 2.400L7 1.400V8H0zM8 1.300L17 0V8H8zM0 9h7v6.600L0 14.600zM8 9h9v8l-9-1.300z" fill="#fff"/>');
    const pin = svg(22,26,'<path d="M11 13C5 14 1 11 2 6 3 1 9 1 11 4 9 7 10 11 11 13zM11 13C17 12 21 15 20 20 19 25 13 25 11 22 13 19 12 15 11 13z" fill="#e8e8e8"/><path d="M11 13C14 8 14 3 18 2 22 2 22 8 19 10 16 12 13 12 11 13zM11 13C8 18 8 23 4 24 0 24 0 18 3 16 6 14 9 14 11 13z" fill="#cfcfcf"/>');
    return flow([
      [0,48,`<span style="margin-left:16px">${win}</span>`],
      [48,344,`<span style="margin-left:12px">${svg(16,16,'<circle cx="8" cy="8" r="6.500" fill="none" stroke="#e8e8e8" stroke-width="2.200"/>')}</span><span style="margin-left:8px;flex:1">在这里输入你要搜索的内容</span><span style="margin-right:15px">${svg(11,16,'<rect x="3" y="0" width="5" height="10" rx="2.500" fill="none" stroke="#888"/><path d="M1 7a4.500 4.500 0 0 0 9 0M5.500 12v3M3 15.500h5" fill="none" stroke="#888"/>')}</span>`,'search'],
      [407,22,pin],
      [456,22,svg(22,24,'<path d="M19 8A9 9 0 1 0 18 19M16 11a6 6 0 1 0-3 6q-5 0-5-5t5-4q3 1 2 4" fill="none" stroke="#d0d0d0" stroke-width="1.500"/>')],
      [509,22,svg(22,24,'<path d="M2 13C2 6 6 2 12 2c5 0 8 4 8 9v2H7c0 5 7 6 12 3v5c-7 3-17 1-17-8zM7 9h8c0-4-7-4-8 0z" fill="#1b78d3"/>')],
      [558,20,svg(20,24,'<path d="M1 7h18v15H1z" fill="#fff"/><path d="M6 7V4a4 4 0 0 1 8 0v3" fill="none" stroke="#fff" stroke-width="1.500"/><path d="M6 11h3.500v3.500H6zM10.500 11H14v3.500h-3.500zM6 15.500h3.500V19H6zM10.500 15.500H14V19h-3.500z" fill="#101214"/>')],
      [608,22,svg(22,22,'<path d="M1 3h7l2 2h11v15H1z" fill="#f4d77e"/><path d="M1 8h20v12H1z" fill="#f9e6a8"/><rect x="7" y="13" width="8" height="7" fill="#3c9ad8"/>')],
      [655,24,svg(24,24,'<circle cx="12" cy="12" r="11" fill="#58b72f"/><path d="M3 12q9-9 18-5" fill="none" stroke="#e7f7d8" stroke-width="1.500"/><path d="M17 12H7a5 5 0 0 0 9 3" fill="none" stroke="#fff" stroke-width="2.500"/>')],
      [694,46,svg(24,24,'<rect width="24" height="24" rx="4" fill="#0f8ef0"/><path d="M12 3v18M4 12h16" stroke="#fff" stroke-width="2"/><circle cx="7.500" cy="8" r="2.500" fill="none" stroke="#fff" stroke-width="1.500"/><circle cx="16.500" cy="8" r="2.500" fill="none" stroke="#fff" stroke-width="1.500"/>'),'act u'],
      [745,41,svg(24,24,'<rect width="24" height="24" rx="3" fill="#f2b418"/><rect x="4" y="5" width="14" height="16" fill="#f9e8b4" transform="rotate(-8 11 13)"/><path d="M6 10l9-1M6 13l9-1M7 16l8-1" stroke="#b58a30"/><path d="M20 2L13 15" stroke="#c9501c" stroke-width="2"/>'),'u'],
      [795,41,svg(24,24,'<path d="M21 3C12-1 3 6 3 14s8 10 13 7 6-8 3-11l-7 1 4 3c-1 3-6 3-7-1s3-9 12-10z" fill="#1b8fe8"/>'),'u'],
      [1030,36,'<span>43%</span><span style="white-space:nowrap">CPU使用</span>','col'],
      [1092,12,svg(12,8,'<path d="M.5 7.500L6 1.500l5.500 6" fill="none" stroke="#e8e8e8" stroke-width="1.200"/>')],
      [1115,17,svg(17,14,'<rect x="3.500" y="4.500" width="12" height="8" fill="none" stroke="#eee"/><rect x="5" y="6" width="9" height="5" fill="#eee"/><path d="M1 3h6" stroke="#eee" stroke-width="1.500"/>')],
      [1140,14,svg(14,14,'<path d="M1 13a12 12 0 0 1 12-12M4 13a9 9 0 0 1 9-9M7 13a6 6 0 0 1 6-6" fill="none" stroke="#bbb" stroke-dasharray="1.500 .8"/>')],
      [1162,14,svg(14,14,'<path d="M1 5h3l3-3v10L4 9H1z" fill="none" stroke="#eee"/><path d="M9 4q2 3 0 6M11 2q3 5 0 10" fill="none" stroke="#bbb"/>')],
      [1187,14,'<span style="font-size:14px">中</span>'],
      [1214,16,svg(16,18,'<rect x="1" y="1" width="14" height="15" rx="3" transform="rotate(-8 8 8)" fill="#f04e23"/><path d="M11 5q-3-2-6 0-2 2 1 3t3 2q-2 2-5 0" fill="none" stroke="#fff" stroke-width="1.800"/>')],
      [1264,76,'<span>14:05</span><span>2017/7/23</span>','col'],
      [1325,22,svg(22,22,'<path d="M1 2h15v12H6l-2 2v-2H1z" fill="#fff"/><path d="M4 5h9M4 8h9" stroke="#101214"/><circle cx="14" cy="14" r="7" fill="#333" stroke="#aaa"/><text x="14" y="18" font-size="11" font-weight="bold" fill="#fff" text-anchor="middle" font-family="Liberation Sans">2</text>')],
    ]);
  }
}

customElements.define('ggj-app', GgjApp);
customElements.define('title-bar', TitleBar);
customElements.define('menu-bar', MenuBar);
customElements.define('main-toolbar', MainToolbar);
customElements.define('work-area', WorkArea);
customElements.define('nav-panel', NavPanel);
customElements.define('edit-toolbar', EditToolbar);
customElements.define('component-tree', ComponentTree);
customElements.define('prop-panel', PropPanel);
customElements.define('section-canvas', SectionCanvas);
customElements.define('section-dialog', SectionDialog);
customElements.define('red-mark', RedMark);
customElements.define('score-badge', ScoreBadge);
customElements.define('ime-bar', ImeBar);
customElements.define('status-strip', StatusStrip);
customElements.define('win-taskbar', WinTaskbar);
</script>
</body>
</html>
